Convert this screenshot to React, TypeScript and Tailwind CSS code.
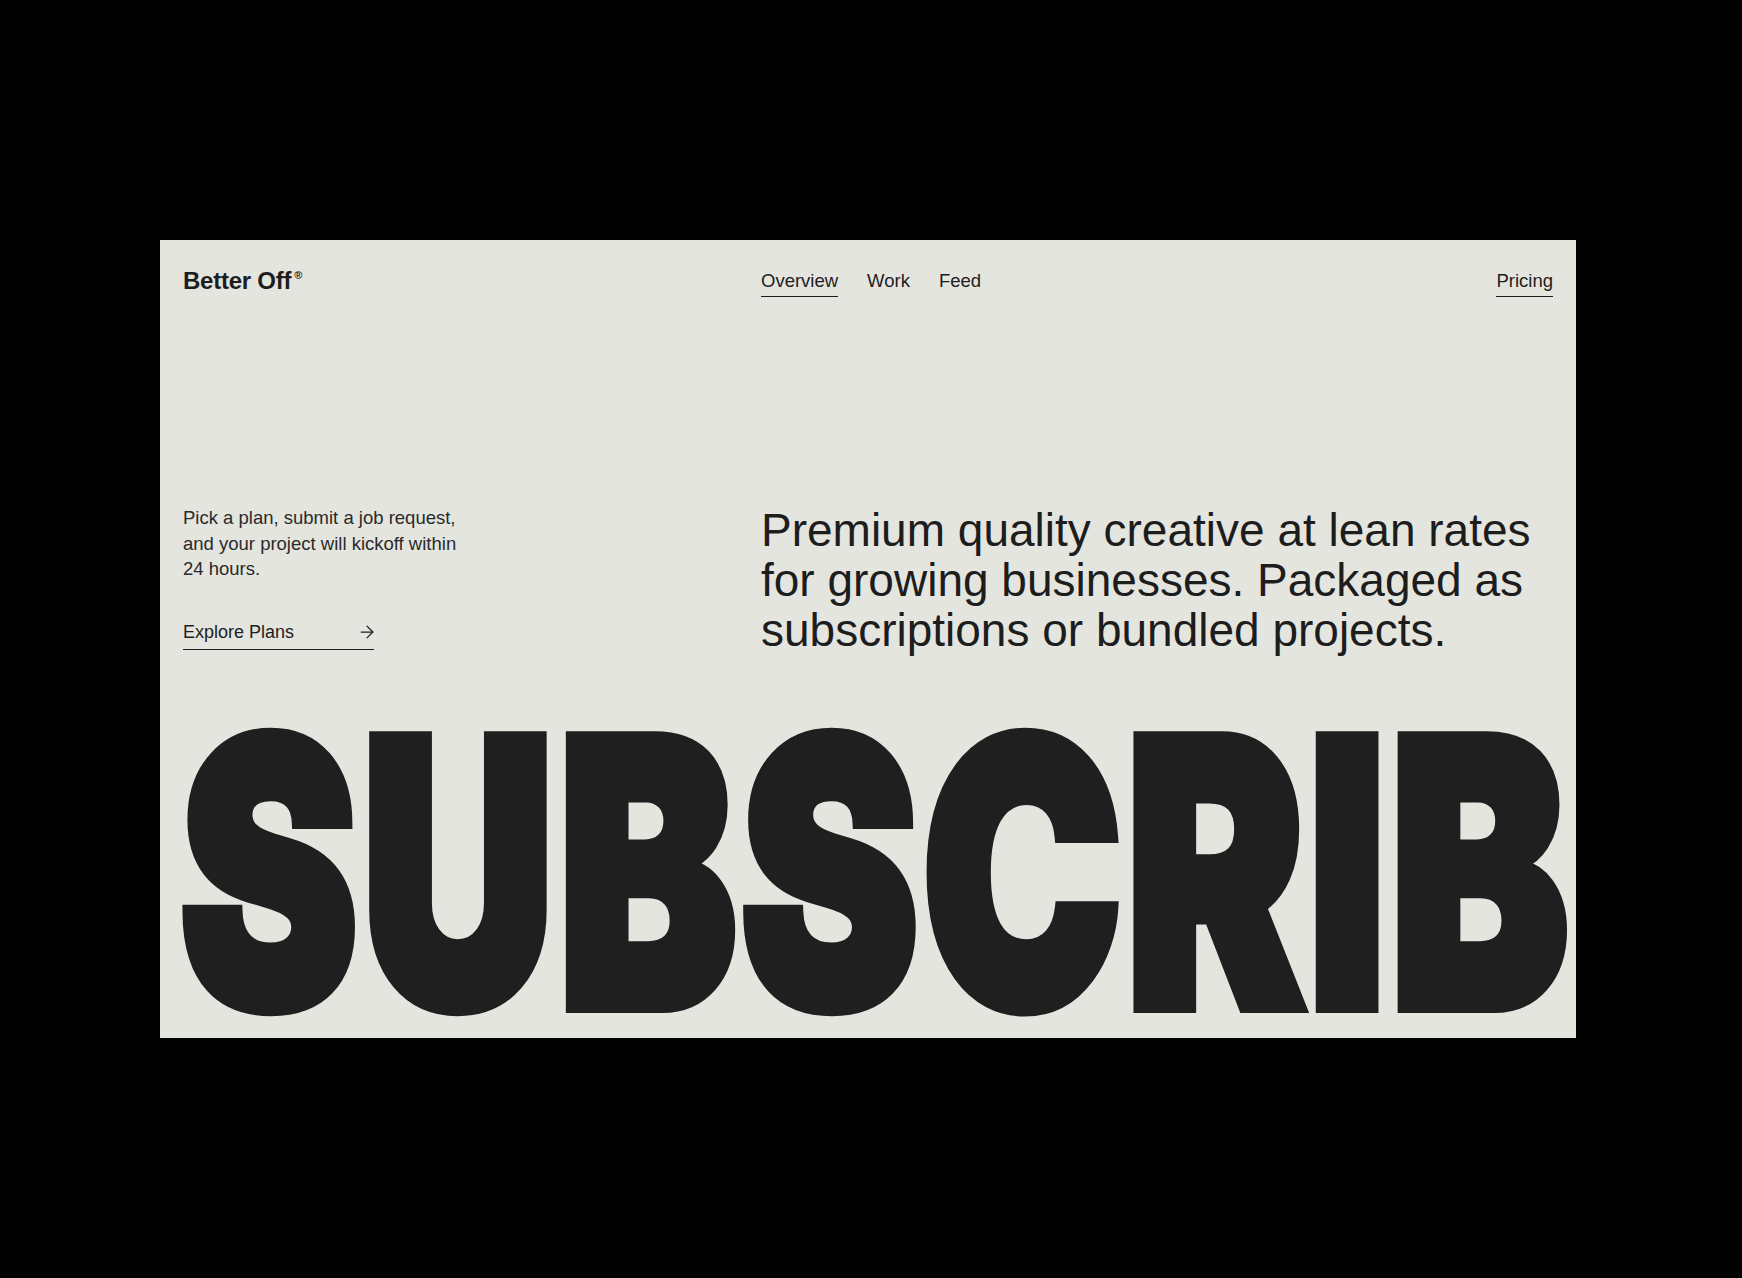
import { ArrowRight } from "lucide-react";

const navLinks = [
  { label: "Overview", active: true },
  { label: "Work", active: false },
  { label: "Feed", active: false },
];

export default function App() {
  return (
    <div className="min-h-screen w-full bg-black pt-[240px] [font-family:'Liberation_Sans',Arial,sans-serif]">
      <section className="ml-[160px] flex h-[798px] w-[1416px] flex-col overflow-hidden bg-[#e5e5df] px-[23px] text-[#1d1d1d]">
        {/* top bar */}
        <header className="grid h-[82px] shrink-0 grid-cols-[578px_1fr_auto] items-start pt-[27px]">
          <a href="#" className="flex items-start text-[24px] font-bold leading-[28px] tracking-[-0.01em]">
            Better Off
            <span className="ml-[3px] mt-[3px] text-[11px] font-bold leading-none">®</span>
          </a>
          <nav className="flex gap-[29px] pt-[3px]">
            {navLinks.map((l) => (
              <a
                key={l.label}
                href="#"
                className={
                  l.active
                    ? "border-b-[1.5px] border-[#1d1d1d] pb-[4px] text-[18.5px] leading-[22px]"
                    : "border-b-[1.5px] border-transparent pb-[4px] text-[18.5px] leading-[22px]"
                }
              >
                {l.label}
              </a>
            ))}
          </nav>
          <a href="#" className="mt-[3px] border-b-[1.5px] border-[#1d1d1d] pb-[4px] text-[18.5px] leading-[22px]">
            Pricing
          </a>
        </header>

        {/* intro */}
        <div className="mt-[183px] grid shrink-0 grid-cols-[578px_1fr] items-start">
          <div>
            <p className="w-[285px] text-[18.5px] leading-[25.5px] text-[#2a2a2a]">
              Pick a plan, submit a job request, and your project will kickoff within 24 hours.
            </p>
            <a
              href="#"
              className="mt-[39px] flex w-[191px] items-center justify-between border-b-[1.5px] border-[#1d1d1d] pb-[6px] text-[18px] leading-[22px]"
            >
              Explore Plans
              <ArrowRight size={20} strokeWidth={1.5} className="mr-[-3px]" />
            </a>
          </div>
          <h1 className="text-[46px] font-normal leading-[50px] text-[#1d1d1d]">
            Premium quality creative at lean rates for growing businesses. Packaged as subscriptions or bundled projects.
          </h1>
        </div>

        {/* big word */}
        <div className="ml-[-3px] mt-[33px] shrink-0 origin-left scale-x-[0.724] whitespace-nowrap [font-family:Inter,sans-serif] text-[368px] font-black leading-none tracking-[6px] text-[#1f1f1f] [-webkit-text-stroke:14px_#1f1f1f]">
          SUBSCRIBE
        </div>
      </section>
    </div>
  );
}
